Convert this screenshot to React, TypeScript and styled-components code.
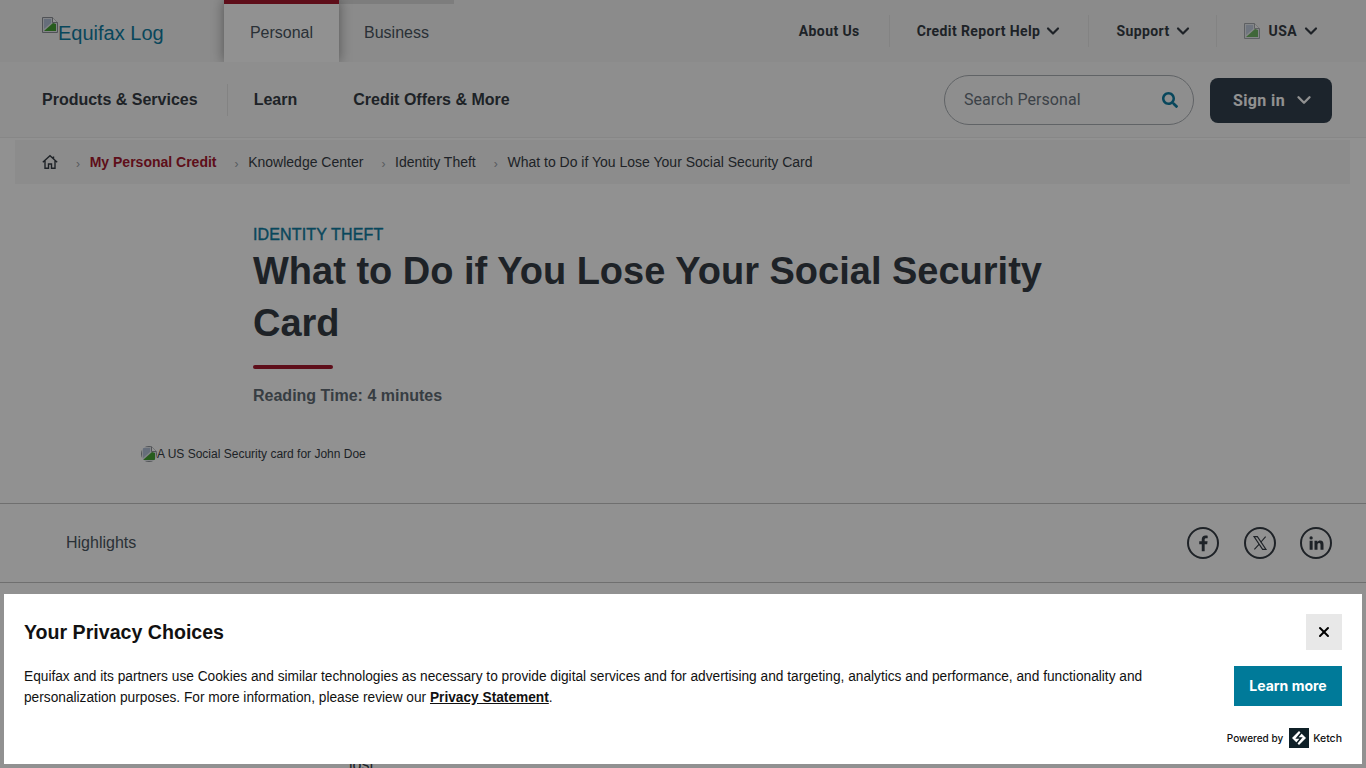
import React from 'react';
import styled, { createGlobalStyle } from 'styled-components';
import { ChevronDown, X } from 'lucide-react';
import { FaSearch } from 'react-icons/fa';

const GlobalStyle = createGlobalStyle`
    html, body {
        margin: 0;
        height: 100%;
        overflow: hidden;
        background: #fff;
        font-family: "Liberation Sans", Arial, sans-serif;
    }
`

const Page = styled.div`
    height: 768px;
    overflow: hidden;
    background: #fff;
    color: #363d45;
`
const TopBar = styled.div`
    height: 62px;
    display: flex;
    align-items: stretch;
    padding: 0 42px;
    background: #f4f4f4;
`
const Logo = styled.a`
    width: 182px;
    display: flex;
    align-items: flex-start;
    padding-top: 17px;
    box-sizing: border-box;
    color: #0f7da2;
    font-size: 20px;
    line-height: 32px;
`
const Tabs = styled.div`
    display: flex;
    width: 230px;
    border-top: 4px solid #dcdcdc;
`
const Tab = styled.a<{ $active?: boolean }>`
    width: 115px;
    box-sizing: border-box;
    display: flex;
    align-items: center;
    justify-content: center;
    font-size: 16px;
    color: #4b5661;
    ${p => p.$active && `
        margin-top: -4px;
        height: 62px;
        border-top: 4px solid #a6192e;
        background: #fff;
        clip-path: inset(0 -14px 0 -14px);
        box-shadow: 0 0 12px rgba(0, 0, 0, .4);
    `}
`
const UtilityNav = styled.nav`
    margin-left: auto;
    display: flex;
    align-items: center;
    padding-right: 3px;
`
const UtilityItem = styled.a<{ $pad: number; $last?: boolean }>`
    display: flex;
    align-items: center;
    gap: ${p => p.$last ? '4px' : '3px'};
    height: 32px;
    padding: 0 ${p => p.$pad}px 0 27px;
    border-right: ${p => p.$last ? 'none' : '1px solid #e6e6e6'};
    font-family: Roboto, sans-serif;
    font-size: 14px;
    font-weight: 700;
    letter-spacing: .4px;
    color: #363d45;
`
const BrokenFlag = styled.svg`
    width: 16px;
    height: 16px;
    margin-right: 5px;
    opacity: .75;
`
const MainNav = styled.div`
    height: 76px;
    display: flex;
    align-items: center;
    padding: 0 34px 0 42px;
    background: #fafafa;
    border-bottom: 1px solid #eee;
    box-sizing: border-box;
`
const MainLink = styled.a<{ $divided?: boolean }>`
    font-size: 16px;
    font-weight: 700;
    color: #363d45;
    ${p => p.$divided && `
        padding-right: 29px;
        margin-right: 26px;
        border-right: 1px solid #e6e6e6;
        line-height: 32px;
    `}
`
const NavGap = styled.div`
    width: 56px;
`
const SearchBox = styled.div`
    margin-left: auto;
    width: 250px;
    height: 50px;
    box-sizing: border-box;
    display: flex;
    align-items: center;
    justify-content: space-between;
    padding: 0 15px 0 19px;
    border: 1px solid #a9aeb3;
    border-radius: 25px;
    font-family: Roboto, sans-serif;
    font-size: 16px;
    letter-spacing: .05px;
    color: #6a747e;
`
const SignIn = styled.button`
    margin: 1px 0 0 16px;
    width: 122px;
    height: 45px;
    display: flex;
    align-items: center;
    justify-content: center;
    gap: 8px;
    padding: 0 0 0 6px;
    border: none;
    border-radius: 8px;
    background: #32404e;
    color: #fff;
    font-family: Roboto, sans-serif;
    font-size: 16px;
    font-weight: 700;
    letter-spacing: .4px;
`
const Breadcrumb = styled.div`
    height: 44px;
    margin: 2px 16px 0 15px;
    padding-left: 27px;
    display: flex;
    align-items: center;
    background: #f6f6f6;
    font-size: 14px;
    color: #363d45;
`
const HomeIcon = styled.svg`
    width: 16px;
    height: 16px;
`
const Crumb = styled.a<{ $current?: boolean }>`
    ${p => p.$current && `
        font-weight: 700;
        color: #a6192e;
    `}
`
const CrumbSep = styled.span`
    width: 31.7px;
    box-sizing: border-box;
    padding: 3px 0 0 18px;
    font-size: 12px;
    color: #9aa0a6;
`
const Article = styled.div`
    padding: 41px 0 0 253px;
`
const Eyebrow = styled.div`
    font-size: 16px;
    line-height: 20px;
    letter-spacing: .15px;
    -webkit-text-stroke: .4px #0f7da2;
    color: #0f7da2;
`
const Title = styled.h1`
    margin: 0;
    width: 820px;
    font-size: 38px;
    line-height: 52px;
    font-weight: 700;
    color: #363d45;
`
const Rule = styled.div`
    margin-top: 16px;
    width: 80px;
    height: 4px;
    border-radius: 2px;
    background: #a6192e;
`
const ReadingTime = styled.div`
    margin-top: 17px;
    font-size: 16px;
    line-height: 20px;
    font-weight: 700;
    color: #616b75;
`
const HeroAlt = styled.div`
    margin: 40px 0 0 141px;
    height: 57px;
    display: flex;
    align-items: flex-start;
    font-size: 12px;
    line-height: 16px;
    color: #363d45;
`
const LogoIcon = styled.svg`
    width: 16px;
    height: 16px;
    flex: none;
`
const HeroIcon = styled(LogoIcon)`
    border-radius: 50%;
`
const ShareBar = styled.div`
    height: 80px;
    box-sizing: border-box;
    display: flex;
    align-items: center;
    padding: 0 34px 0 66px;
    border-top: 1px solid #c4c4c4;
    border-bottom: 1px solid #c4c4c4;
    font-size: 16px;
    color: #4b5661;
`
const ShareIcons = styled.div`
    margin-left: auto;
    display: flex;
    gap: 24.5px;
`
const ShareIcon = styled.a`
    width: 32px;
    height: 32px;
    box-sizing: border-box;
    display: flex;
    align-items: center;
    justify-content: center;
    border: 2px solid #363d45;
    border-radius: 50%;
    color: #363d45;
`
const StrayWord = styled.div`
    margin: 170px 0 0 349px;
    font-size: 16px;
    line-height: 24px;
    color: #363d45;
`
const Scrim = styled.div`
    position: fixed;
    inset: 0;
    background: rgba(0, 0, 0, .43);
`
const Banner = styled.div`
    position: fixed;
    left: 4px;
    right: 4px;
    top: 594px;
    height: 170px;
    box-sizing: border-box;
    padding: 20px 20px 0;
    display: grid;
    grid-template-columns: 1fr auto;
    background: #fff;
    color: #000;
`
const BannerText = styled.div`
    min-width: 0;
`
const BannerTitle = styled.h2`
    margin: 0;
    font-size: 19.6px;
    line-height: 36px;
    font-weight: 700;
    color: #111;
`
const BannerBody = styled.p`
    margin: 16px 0 0;
    width: 1150px;
    font-size: 13.71px;
    line-height: 21px;
    color: #111;
`
const PrivacyLink = styled.a`
    font-weight: 700;
    text-decoration: underline;
`
const BannerActions = styled.div`
    display: flex;
    flex-direction: column;
    align-items: flex-end;
`
const CloseButton = styled.button`
    width: 36px;
    height: 36px;
    padding: 0;
    display: flex;
    align-items: center;
    justify-content: center;
    border: none;
    background: #e8e8e8;
    color: #000;
`
const LearnMore = styled.button`
    margin-top: 16px;
    width: 108px;
    height: 40px;
    padding: 0 0 2px;
    border: none;
    background: #007a99;
    color: #fff;
    font-family: Inter, sans-serif;
    font-size: 14px;
    font-weight: 700;
`
const Powered = styled.div`
    margin-top: 22px;
    display: flex;
    align-items: center;
    font-family: Inter, sans-serif;
    font-size: 10px;
    font-weight: 500;
    color: #111;
`
const KetchName = styled.span`
    font-size: 10.5px;
`
const KetchMark = styled.svg`
    width: 20px;
    height: 20px;
    margin: 0 4px 0 6px;
`

const BrokenImage = ({ as: Comp }: { as: typeof LogoIcon | typeof HeroIcon | typeof BrokenFlag }) => (
    <Comp viewBox="0 0 16 16">
        <path d="M.5 .5h10l5 5v10H.5z" fill="#e4e8ee" stroke="#8d9197" />
        <path d="M10.500 .5v5h5" fill="#fff" stroke="#8d9197" />
        <path d="M2 2h7v4l-7 6z" fill="#b4c2d8" />
        <path d="M2 14l9-8 3 1v7z" fill="#46a234" />
    </Comp>
);

export default function App() {
    return (
        <Page>
            <GlobalStyle />
            <TopBar>
                <Logo>
                    <BrokenImage as={LogoIcon} />Equifax Log
                </Logo>
                <Tabs>
                    <Tab $active>Personal</Tab>
                    <Tab>Business</Tab>
                </Tabs>
                <UtilityNav>
                    <UtilityItem $pad={29}>About Us</UtilityItem>
                    <UtilityItem $pad={25}>Credit Report Help <ChevronDown size={20} strokeWidth={2.6} /></UtilityItem>
                    <UtilityItem $pad={23}>Support <ChevronDown size={20} strokeWidth={2.6} /></UtilityItem>
                    <UtilityItem $pad={0} $last><BrokenImage as={BrokenFlag} />USA <ChevronDown size={20} strokeWidth={2.6} /></UtilityItem>
                </UtilityNav>
            </TopBar>
            <MainNav>
                <MainLink $divided>Products &amp; Services</MainLink>
                <MainLink>Learn</MainLink>
                <NavGap />
                <MainLink>Credit Offers &amp; More</MainLink>
                <SearchBox>
                    Search Personal
                    <FaSearch size={16} color="#0f7da2" />
                </SearchBox>
                <SignIn>Sign in <ChevronDown size={22} strokeWidth={2.6} /></SignIn>
            </MainNav>
            <Breadcrumb>
                <HomeIcon viewBox="0 0 16 16" fill="none" stroke="currentColor" strokeWidth="1.4">
                    <path d="M.8 8.200 8 1.800l7.200 6.400M11.500 4.500V2.500M3 6.500V14.300h3.500V10h3v4.300H13V6.500" />
                </HomeIcon>
                <CrumbSep>›</CrumbSep>
                <Crumb $current>My Personal Credit</Crumb>
                <CrumbSep>›</CrumbSep>
                <Crumb>Knowledge Center</Crumb>
                <CrumbSep>›</CrumbSep>
                <Crumb>Identity Theft</Crumb>
                <CrumbSep>›</CrumbSep>
                <Crumb>What to Do if You Lose Your Social Security Card</Crumb>
            </Breadcrumb>
            <Article>
                <Eyebrow>IDENTITY THEFT</Eyebrow>
                <Title>What to Do if You Lose Your Social Security Card</Title>
                <Rule />
                <ReadingTime>Reading Time: 4 minutes</ReadingTime>
            </Article>
            <HeroAlt>
                <BrokenImage as={HeroIcon} />A US Social Security card for John Doe
            </HeroAlt>
            <ShareBar>
                Highlights
                <ShareIcons>
                    <ShareIcon>
                        <svg width="20" height="20" viewBox="0 0 24 24" fill="currentColor"><path d="M14 22v-8.500h3l.5-3.500H14V8c0-1 .4-1.700 1.800-1.700h1.800V3.200C17.200 3.100 16.200 3 15 3c-2.700 0-4.500 1.600-4.500 4.600V10H7.500v3.500h3V22z" /></svg>
                    </ShareIcon>
                    <ShareIcon>
                        <svg width="18" height="18" viewBox="0 0 24 24" fill="none" stroke="currentColor" strokeWidth="1.500"><path d="M4 3.500h4.500L20 20.500h-4.500z" /><path d="M19.500 3.500l-6.500 7.500M11 13.500 4.500 20.500" /></svg>
                    </ShareIcon>
                    <ShareIcon>
                        <svg width="18" height="18" viewBox="0 0 24 24" fill="currentColor"><path d="M3.500 9h4v12h-4zM5.500 3a2.200 2.200 0 1 1 0 4.400 2.200 2.200 0 0 1 0-4.400zM10 9h3.800v1.700c.7-1.100 2-2 3.800-2 3.300 0 4.400 2 4.400 5.300v7h-4v-6.200c0-1.600-.4-2.700-1.900-2.700-1.600 0-2.100 1.200-2.100 2.800V21h-4z" /></svg>
                    </ShareIcon>
                </ShareIcons>
            </ShareBar>
            <StrayWord>lost</StrayWord>
            <Scrim />
            <Banner>
                <BannerText>
                    <BannerTitle>Your Privacy Choices</BannerTitle>
                    <BannerBody>
                        Equifax and its partners use Cookies and similar technologies as necessary to provide digital services and for advertising and targeting, analytics and performance, and functionality and personalization purposes. For more information, please review our <PrivacyLink>Privacy Statement</PrivacyLink>.
                    </BannerBody>
                </BannerText>
                <BannerActions>
                    <CloseButton><X size={16} strokeWidth={3} /></CloseButton>
                    <LearnMore>Learn more</LearnMore>
                    <Powered>
                        Powered by
                        <KetchMark viewBox="0 0 20 20">
                            <rect width="20" height="20" fill="#0f2027" />
                            <path d="M10 3l7 7-7 7-7-7z" fill="#fff" />
                            <path d="M12.500 4.500 8 10h4l-4.500 5.500" fill="none" stroke="#0f2027" strokeWidth="1.600" />
                        </KetchMark>
                        <KetchName>Ketch</KetchName>
                    </Powered>
                </BannerActions>
            </Banner>
        </Page>
    );
}
